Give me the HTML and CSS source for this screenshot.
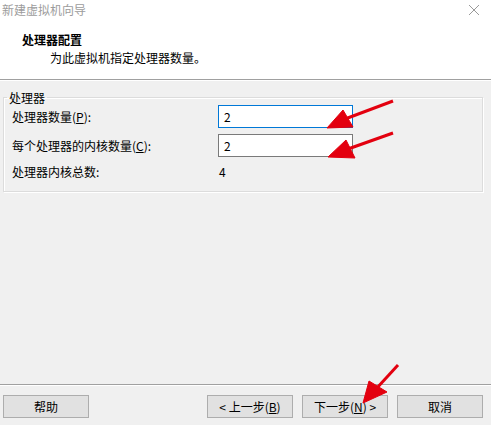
FILE: index.html
```html
<!DOCTYPE html>
<html lang="zh-CN">
<head>
<meta charset="utf-8">
<title>新建虚拟机向导</title>
<link rel="stylesheet" href="styles.css">
</head>
<body>
<div class="dialog">
  <div class="top">
    <div class="titlebar">
      <span class="title">新建虚拟机向导</span>
      <svg class="close" width="12" height="12" viewBox="0 0 12 12"><path d="M1 1L11 11M11 1L1 11" stroke="#9a9a9a" stroke-width="1" fill="none"/></svg>
    </div>
    <div class="header">
      <div class="h-title">处理器配置</div>
      <div class="h-sub">为此虚拟机指定处理器数量。</div>
    </div>
  </div>
  <div class="sep"></div>
  <div class="content">
    <fieldset class="group">
      <legend>处理器</legend>
      <div class="row first">
        <span class="lbl">处理器数量(<u>P</u>):</span>
        <span class="input focus">2</span>
      </div>
      <div class="row">
        <span class="lbl">每个处理器的内核数量(<u>C</u>):</span>
        <span class="input">2</span>
      </div>
      <div class="row total">
        <span class="lbl">处理器内核总数:</span>
        <span class="val">4</span>
      </div>
    </fieldset>
  </div>
  <div class="sep bottom"></div>
  <div class="footer">
    <button class="btn">帮助</button>
    <div class="spacer"></div>
    <button class="btn">&lt; 上一步(<u>B</u>)</button>
    <button class="btn">下一步(<u>N</u>) &gt;</button>
    <button class="btn">取消</button>
  </div>
  <svg class="arrows" width="491" height="425" viewBox="0 0 491 425">
    <g fill="#e3000f" stroke="#e3000f">
      <line x1="393" y1="101" x2="345" y2="119" stroke-width="3"/>
      <polygon points="327,128 343,110 353,127" stroke-width="1"/>
      <line x1="393" y1="133" x2="348" y2="149" stroke-width="3"/>
      <polygon points="328,157 346,140 355,158" stroke-width="1"/>
      <line x1="398" y1="365" x2="376" y2="389" stroke-width="3"/>
      <polygon points="363,403 369,381 387,392" stroke-width="1"/>
    </g>
  </svg>
</div>
</body>
</html>
```
FILE: styles.css
```css
html, body {
  margin: 0;
  padding: 0;
}
body {
  font-family: "Noto Sans CJK SC", "Noto Sans", sans-serif;
  font-size: 12px;
  color: #000;
  background: #f0f0f0;
}
.dialog {
  position: relative;
  width: 491px;
  height: 425px;
  display: flex;
  flex-direction: column;
  background: #f0f0f0;
  overflow: hidden;
}
.top {
  background: #fff;
  height: 79px;
  flex: none;
}
.titlebar {
  height: 20px;
  display: flex;
  align-items: center;
  justify-content: space-between;
  padding: 0 11px 0 2px;
}
.title {
  color: #9c9c9c;
  font-size: 12px;
  line-height: 16px;
}
.close {
  display: block;
}
.header {
  padding-left: 22px;
}
.h-title {
  margin-top: 12px;
  font-weight: bold;
  font-size: 12px;
  line-height: 16px;
}
.h-sub {
  margin-top: 2px;
  padding-left: 28px;
  line-height: 16px;
}
.sep {
  flex: none;
  height: 0;
  border-top: 1px solid #a0a0a0;
  border-bottom: 1px solid #fff;
}
.content {
  flex: 1;
  padding: 9px 8px 0 3px;
}
.group {
  margin: 0;
  padding: 0 6px 9px 6px;
  border: 1px solid #dcdcdc;
  box-shadow: inset 1px 1px 0 #fff, 1px 1px 0 #fff;
  min-width: 0;
}
.group legend {
  padding: 0 2px;
  margin-left: -3px;
  line-height: 15px;
}
.row {
  display: flex;
  align-items: center;
  height: 29px;
}
.row.first {
  margin-top: -3px;
}
.lbl {
  width: 206px;
  flex: none;
  padding-left: 2px;
}
.input {
  box-sizing: border-box;
  width: 135px;
  height: 23px;
  background: #fff;
  border: 1px solid #7a7a7a;
  padding: 0 5px;
  line-height: 21px;
}
.input.focus {
  border-color: #0078d7;
}
.total {
  height: 22px;
}
.val {
  padding-left: 1px;
}
.footer {
  flex: none;
  height: 39px;
  display: flex;
  align-items: flex-start;
  padding: 9px 8px 0 3px;
  box-sizing: border-box;
  gap: 9px;
}
.spacer {
  flex: 1;
}
.btn {
  width: 86px;
  height: 23px;
  margin: 0;
  padding: 0;
  font-family: inherit;
  font-size: 12px;
  color: #000;
  background: #e1e1e1;
  border: 1px solid #adadad;
  border-radius: 0;
  line-height: 21px;
}
.arrows {
  position: absolute;
  left: 0;
  top: 0;
  pointer-events: none;
}
```
